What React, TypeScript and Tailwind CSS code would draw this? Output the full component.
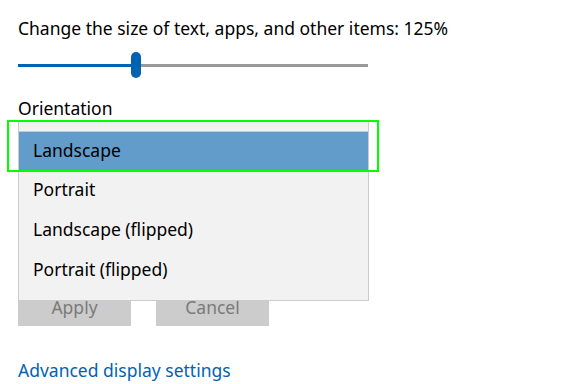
import React from "react";

const options = ["Landscape", "Portrait", "Landscape (flipped)", "Portrait (flipped)"];

export default function App() {
  const selected = 0;
  return (
    <div
      className="relative flex h-[384px] w-[581px] flex-col items-start overflow-hidden bg-white pl-[18px] pt-[16px] text-[17.5px] leading-[24px] text-black"
      style={{ fontFamily: '"Noto Sans", "Open Sans", sans-serif' }}
    >
      <div>Change the size of text, apps, and other items: 125%</div>

      {/* slider */}
      <div className="mt-[12px] flex h-[26px] w-[350px] items-center">
        <div className="h-[3px] w-[113px] bg-[#0063b1]" />
        <div className="h-[26px] w-[10px] rounded-full bg-[#0063b1]" />
        <div className="h-[3px] flex-1 bg-[#999999]" />
      </div>

      <div className="mt-[18px]">Orientation</div>

      {/* closed combo box, covered by the open list */}
      <div className="mt-[1px] h-[34px] w-[350px] border-2 border-[#999]" />

      <div className="mt-[135px] flex gap-[25px]">
        <button className="h-[36px] w-[113px] bg-[#cccccc] pb-[2px] text-[#7a7a7a]">Apply</button>
        <button className="h-[36px] w-[113px] bg-[#cccccc] pb-[2px] text-[#7a7a7a]">Cancel</button>
      </div>

      <a className="mt-[32px] block text-[#0063b1]">Advanced display settings</a>

      {/* open dropdown list */}
      <div className="absolute left-[18px] top-[121px] w-[351px] border border-[#cccccc] bg-[#f2f2f2] py-[9px]">
        {options.map((o, i) => (
          <div
            key={o}
            className={`flex h-[40px] items-center pb-[4px] pl-[14px] ${
              i === selected ? "border-t border-[#b9cde0] bg-[#629ccb]" : ""
            }`}
          >
            {o}
          </div>
        ))}
      </div>

      {/* focus highlight */}
      <div className="absolute left-[7px] top-[120px] h-[52px] w-[372px] border-2 border-[#00ff00]" />
    </div>
  );
}
